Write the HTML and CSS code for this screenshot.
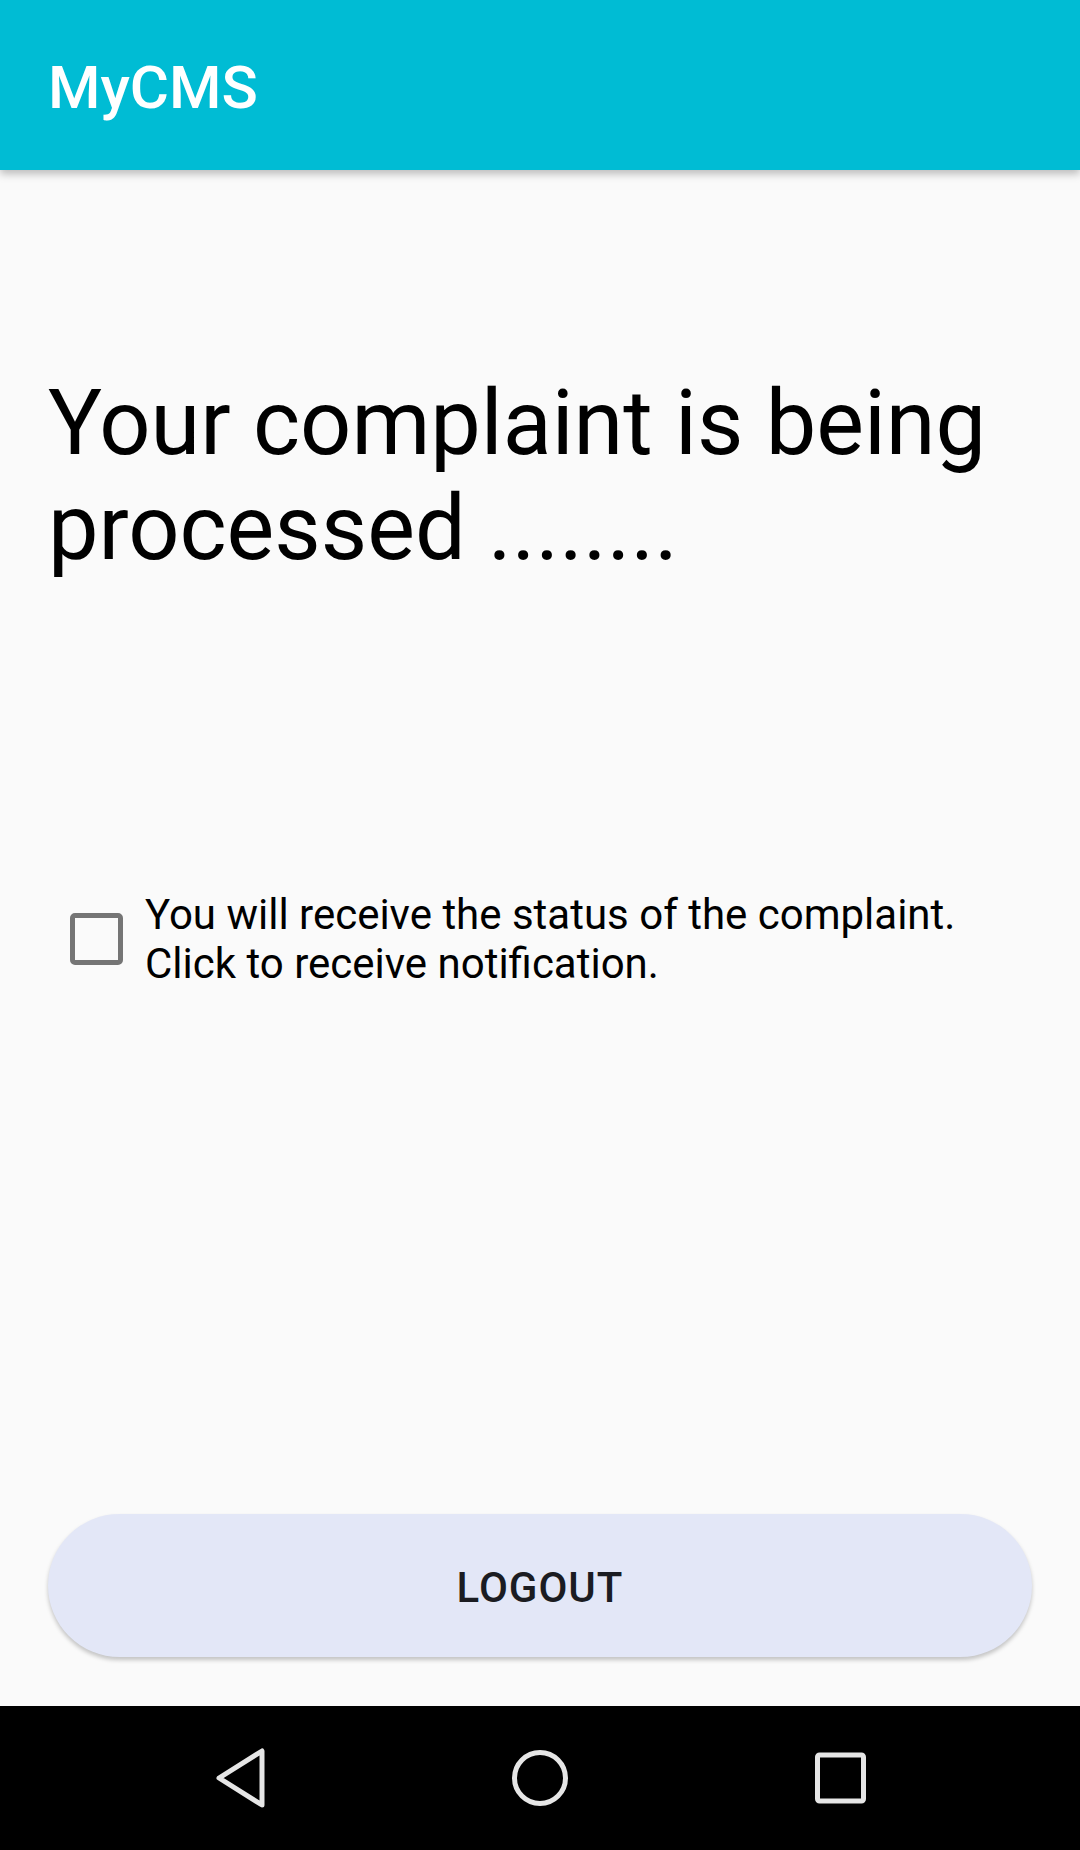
FILE: index.html
```html
<!DOCTYPE html>
<html lang="en">
<head>
<meta charset="utf-8">
<title>MyCMS</title>
<link rel="stylesheet" href="styles.css">
</head>
<body>
<div class="app">
  <header class="toolbar">
    <h1 class="toolbar-title">MyCMS</h1>
  </header>
  <main class="content">
    <h2 class="status">Your complaint is being processed ........</h2>
    <label class="check-row">
      <span class="check-box"></span>
      <span class="check-text">You will receive the status of the complaint.<br>Click to receive notification.</span>
    </label>
    <button class="logout">LOGOUT</button>
  </main>
  <nav class="navbar">
    <svg class="nav-icon" width="60" height="60" viewBox="0 0 60 60">
      <path d="M52 3 L52 57 L9 30 Z" fill="none" stroke="#e6e6e6" stroke-width="5" stroke-linejoin="round"/>
    </svg>
    <svg class="nav-icon" width="60" height="60" viewBox="0 0 60 60">
      <circle cx="30" cy="30" r="25.5" fill="none" stroke="#e6e6e6" stroke-width="5"/>
    </svg>
    <svg class="nav-icon" width="60" height="60" viewBox="0 0 60 60">
      <rect x="7.5" y="7" width="46" height="46" rx="2" fill="none" stroke="#e6e6e6" stroke-width="5"/>
    </svg>
  </nav>
</div>
</body>
</html>
```
FILE: styles.css
```css
* { box-sizing: border-box; }
html, body {
  margin: 0;
  padding: 0;
  background: #fafafa;
  font-family: Roboto, "Noto Sans", "Liberation Sans", sans-serif;
}
.app {
  width: 1080px;
  height: 1850px;
  display: flex;
  flex-direction: column;
  overflow: hidden;
}
.toolbar {
  height: 170px;
  flex: none;
  background: #00bcd4;
  padding: 53px 48px 0;
  box-shadow: 0 4px 8px rgba(0,0,0,0.25);
  position: relative;
  z-index: 1;
}
.toolbar-title {
  margin: 0;
  color: #ffffff;
  font-size: 60px;
  font-weight: 500;
  line-height: 70px;
}
.content {
  flex: 1;
  display: flex;
  flex-direction: column;
  padding: 0 48px;
}
.status {
  margin: 201px 0 0;
  font-size: 90px;
  font-weight: 400;
  line-height: 105px;
  color: #000;
}
.check-row {
  margin-top: 309px;
  display: flex;
  align-items: center;
  padding-left: 22px;
  gap: 22px;
}
.check-box {
  width: 53px;
  height: 52px;
  border: 5px solid #757575;
  border-radius: 5px;
  flex: none;
}
.check-text {
  font-size: 42px;
  line-height: 49px;
  color: #000;
}
.logout {
  margin-top: auto;
  margin-bottom: 49px;
  height: 143px;
  width: 100%;
  border: none;
  border-radius: 72px;
  background: #e3e7f7;
  box-shadow: 0 3px 4px rgba(0,0,0,0.22);
  font-family: Roboto, "Noto Sans", "Liberation Sans", sans-serif;
  font-size: 42px;
  font-weight: 500;
  letter-spacing: 1px;
  color: #1b1c22;
  padding: 4px 0 0;
}
.navbar {
  height: 144px;
  flex: none;
  background: #000;
  display: flex;
  align-items: center;
  justify-content: center;
  gap: 240px;
}
.nav-icon { display: block; }
```
